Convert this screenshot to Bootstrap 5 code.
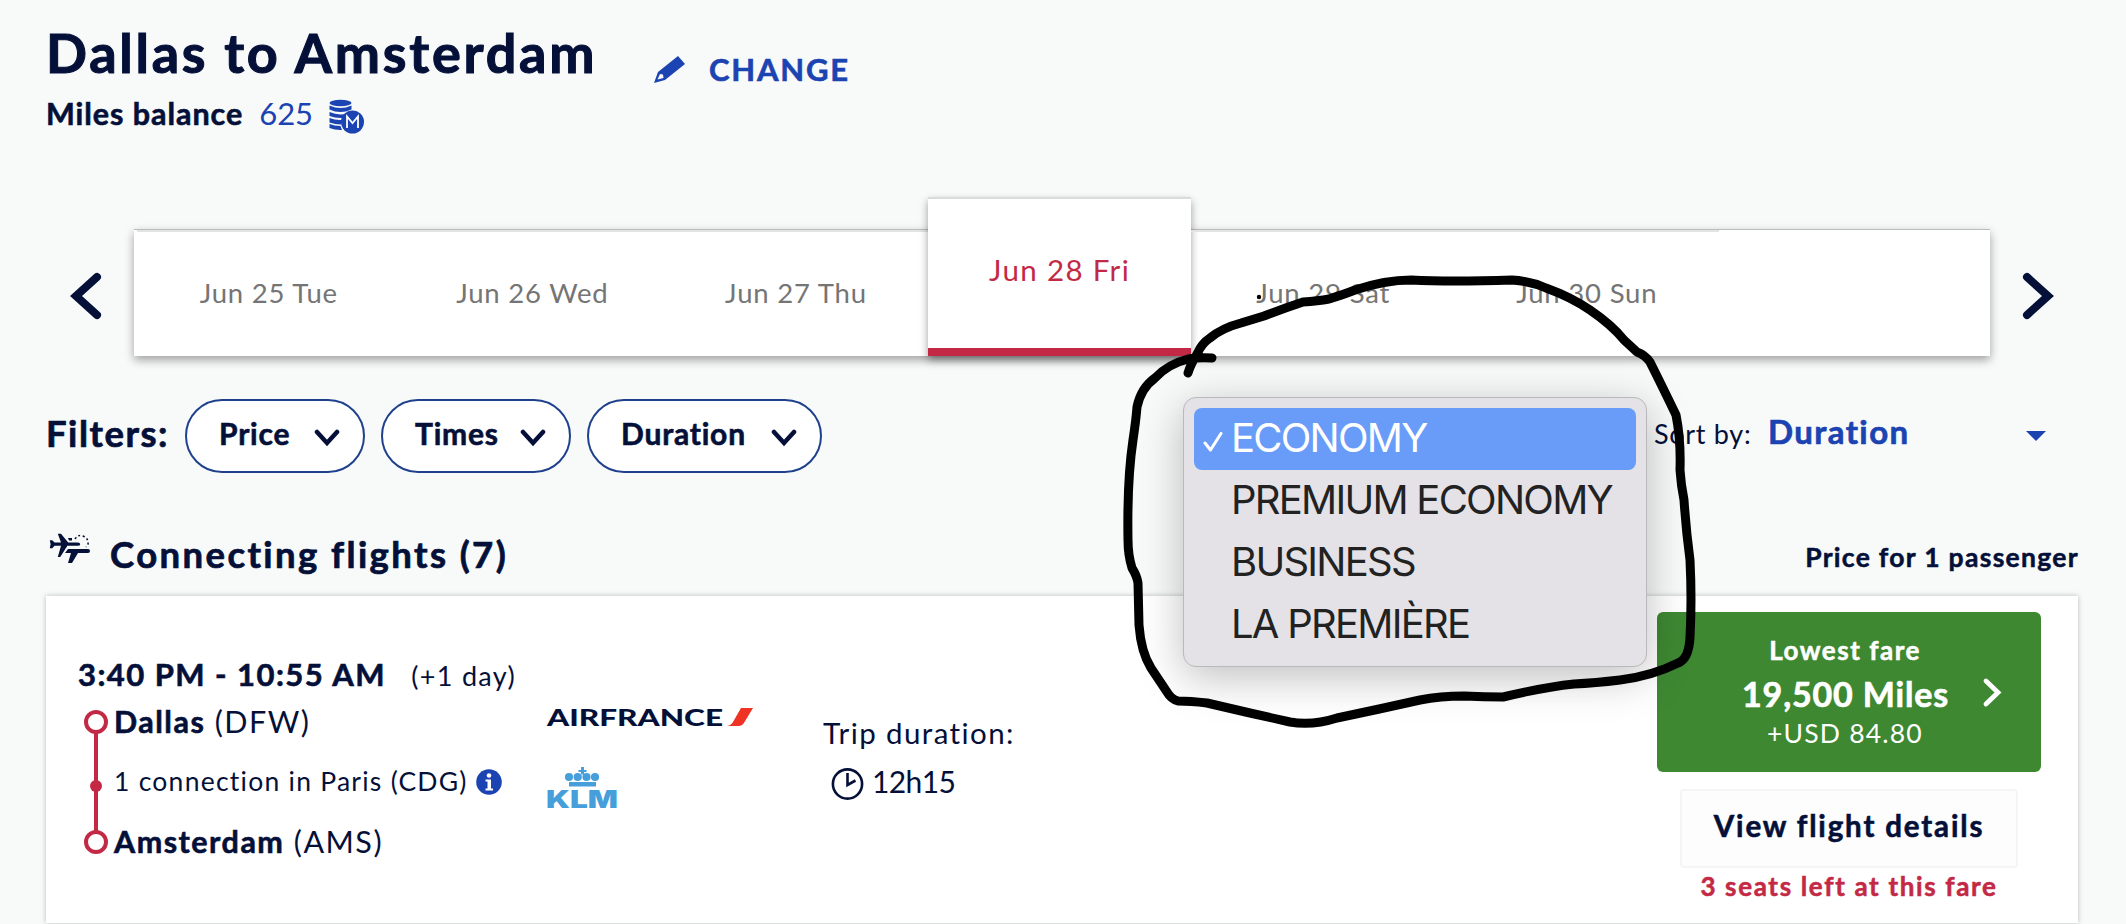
<!DOCTYPE html>
<html lang="en">
<head>
    <meta charset="UTF-8">
    <meta name="viewport" content="width=device-width, initial-scale=1.0">
    <title>Dallas to Amsterdam</title>
    <link href="https://cdn.jsdelivr.net/npm/bootstrap@5.3.0/dist/css/bootstrap.min.css" rel="stylesheet">
    <style>
        body {
            --navy: #051039;
            --blue: #1b43b1;
            --red: #c32945;
            background-color: #f8faf9;
            color: var(--navy);
            font-family: Lato, "Open Sans", sans-serif;
            width: 2126px;
            height: 924px;
            overflow: hidden;
            position: relative;
        }
        svg { display: block; flex: none; }
        b, .fw-bold, .pill, .details { -webkit-text-stroke: .02em currentColor; }
        .text-blue { color: var(--blue); }
        .text-red { color: var(--red); }

        /* Header */
        .page-head { padding: 21px 47px 0 46px; }
        .route-title { font-size: 54px; line-height: 64px; letter-spacing: 2.75px; width: 608px; }
        .change-link { font-size: 31px; line-height: 40px; letter-spacing: 1.8px; margin-top: 28px; gap: 24px; }
        .change-link svg { margin-top: 6px; }
        .miles { font-size: 30.5px; line-height: 36px; height: 36px; margin-top: 6px; letter-spacing: .95px; gap: 16px; }
        .miles .amount { font-size: 31px; letter-spacing: 0; }

        /* Date strip */
        .dates { margin-top: 66px; padding-left: 68px; height: 159px; }
        .dates .arrow { margin-top: 74px; }
        .strip {
            width: 1856px;
            height: 127px;
            margin: 32px 31px 0 31px;
            padding-left: 3px;
            background: #fff;
            border-top: 1px solid #bcbcbc;
            box-shadow: 0 4px 9px rgba(0,0,0,.36);
        }
        .day {
            width: 263.6px;
            height: 126px;
            line-height: 121px;
            border-top: 2px solid #e3e3e3;
            font-size: 27.5px;
            letter-spacing: .8px;
            color: #757575;
            white-space: nowrap;
        }
        .day.active {
            height: 159px;
            margin-top: -33px;
            line-height: 142px;
            font-size: 29.5px;
            letter-spacing: 1.35px;
            color: var(--red);
            background: #fff;
            border-top: 2px solid #dadada;
            border-bottom: 8px solid var(--red);
            box-shadow: 0 4px 8px rgba(0,0,0,.38);
        }

        /* Filters */
        .filters { margin-top: 43px; padding-left: 46px; height: 74px; }
        .filters .title { font-size: 36.5px; line-height: 68px; letter-spacing: 1.5px; width: 139px; }
        .pill {
            width: 180px;
            height: 74px;
            border: 2px solid #1f418d;
            border-radius: 37px;
            background: #fff;
            color: var(--navy);
            font-size: 30px;
            font-weight: 700;
            line-height: 65px;
            letter-spacing: .8px;
            padding: 0 23px 0 32px;
            margin-right: 16px;
        }
        .pill-times { width: 190px; }
        .pill-duration { width: 235px; }
        .pill svg { margin: 28px 0 0 auto; }
        .sort { margin-left: 816px; width: 392px; }
        .sort .by { font-size: 27px; line-height: 69px; letter-spacing: .7px; width: 114px; }
        .sort .value { font-size: 33px; line-height: 65px; letter-spacing: 1.4px; }

        /* Section heading */
        .section-head { margin-top: 60px; padding: 0 48px 0 49px; height: 63px; }
        .section-head .title { font-size: 36.5px; line-height: 43px; letter-spacing: 2.4px; margin-left: 19px; }
        .section-head .price-for { font-size: 26.5px; line-height: 49px; letter-spacing: 1.3px; margin-right: -1px; }

        /* Flight card */
        .flight {
            width: 2032px;
            height: 327px;
            margin-left: 46px;
            background: #fff;
            box-shadow: 0 0 5px rgba(0,0,0,.25);
        }
        .route-col { width: 501px; padding: 60px 0 0 32px; }
        .times { font-size: 31px; line-height: 36px; height: 36px; letter-spacing: 1.45px; }
        .times small { font-size: 27px; letter-spacing: 1.3px; margin-left: 16px; }
        .stops { padding-left: 2px; margin-top: 15px; }
        .stop-list { margin: -6px 0 0 -1px; }
        .stop { font-size: 30.5px; line-height: 40px; letter-spacing: 1.5px; white-space: nowrap; }
        .via { font-size: 26.5px; line-height: 36px; height: 36px; letter-spacing: 1.25px; margin: 22px 0; gap: 8px; white-space: nowrap; }
        .via svg { margin-top: 6px; }
        .air-col { width: 276px; padding-top: 111px; }
        .air-col svg { overflow: visible; }
        .air-col .klm { margin-top: 32px; }
        .trip-col { width: 834px; padding-top: 119px; font-size: 29.5px; line-height: 36px; letter-spacing: 1.4px; }
        .trip-col .total { margin: 12px 0 0 8px; font-size: 30px; letter-spacing: -.6px; gap: 7px; }
        .fare-col { width: 384px; padding-top: 16px; }
        .fare {
            width: 384px;
            height: 160px;
            background: #3e8832;
            border-radius: 6px;
            color: #fff;
            padding: 20px 39px 0 85px;
        }
        .fare .lines { width: 206px; white-space: nowrap; }
        .fare .label { font-size: 26px; line-height: 36px; letter-spacing: 1.5px; }
        .fare .points { font-size: 34px; line-height: 44px; letter-spacing: .85px; margin-top: 4px; }
        .fare .cash { font-size: 26.5px; line-height: 32px; letter-spacing: 1.2px; margin-top: 1px; }
        .fare svg { margin-top: 44px; }
        .details {
            width: 338px;
            height: 79px;
            margin: 17px 0 0 23px;
            border: 2px solid #f5f5f6;
            border-radius: 4px;
            background: #fdfdfe;
            color: var(--navy);
            font-size: 29.5px;
            font-weight: 700;
            line-height: 64px;
            padding: 0 0 6px;
            letter-spacing: 1.85px;
            white-space: nowrap;
        }
        .seats { font-size: 26px; line-height: 36px; letter-spacing: 1.65px; }

        /* Open cabin menu over the page */
        .cabin-menu {
            position: absolute;
            left: 1183px;
            top: 397px;
            width: 464px;
            height: 270px;
            padding: 10px;
            background: #e4e2e7;
            border: 1px solid #b9b8bb;
            border-radius: 13px;
            box-shadow: 0 10px 44px rgba(0,0,0,.26);
            color: #222;
            font-family: Inter, sans-serif;
        }
        .cabin {
            height: 62px;
            line-height: 59px;
            padding-left: 37px;
            font-size: 40px;
            letter-spacing: -1.75px;
            white-space: nowrap;
        }
        .cabin.selected { background: #689cf8; color: #fff; border-radius: 8px; padding-left: 9px; }
        .cabin.selected svg { margin: 24px 8px 0 0; }
        .marker { position: absolute; left: 0; top: 0; pointer-events: none; }
    </style>
</head>
<body>
    <!-- Header -->
    <header class="page-head">
        <div class="d-flex">
            <h1 class="route-title fw-bold mb-0">Dallas to Amsterdam</h1>
            <a class="change-link text-blue d-flex fw-bold text-decoration-none" href="#">
                <svg width="31" height="30" viewBox="0 0 31 30">
                    <path d="M0 28 4 17 24 1l7 8L11 25z" fill="#1b43b1"/>
                    <path d="M3.500 24.500 6 19l3 .5.5 3.500z" fill="#f8faf9"/>
                </svg>
                CHANGE
            </a>
        </div>
        <div class="miles d-flex">
            <span class="fw-bold">Miles balance</span>
            <span class="amount text-blue">625</span>
            <svg width="36" height="36" viewBox="0 0 36 36" class="mt-1">
                <g fill="#1b43b1">
                    <ellipse cx="11.500" cy="4" rx="11" ry="3.300"/>
                    <path d="M.5 6.500q11 5 22 0v4q-11 5-22 0z"/>
                    <path d="M.5 13q9 4 18 1.500l-4 4.500q-8 .5-14-2z"/>
                    <path d="M.5 19q6 2.500 12.500 2l-1 4.500q-6 0-11.500-2z"/>
                    <path d="M.5 25q5 2 11 2l1.500 4q-7 .3-12.500-2z"/>
                    <circle cx="23.500" cy="23" r="11.500"/>
                </g>
                <path d="M18 29V17.500l5.500 6.500 5.500-6.500V29" fill="none" stroke="#fff" stroke-width="1.800"/>
            </svg>
        </div>
    </header>

    <!-- Date strip -->
    <div class="dates d-flex">
        <svg class="arrow" width="35" height="50" viewBox="0 0 35 50"><path d="M29 6 8 25l21 19" fill="none" stroke="#051039" stroke-width="8" stroke-linecap="round"/></svg>
        <div class="strip d-flex text-center">
            <div class="day">Jun 25 Tue</div>
            <div class="day">Jun 26 Wed</div>
            <div class="day">Jun 27 Thu</div>
            <div class="day active">Jun 28 Fri</div>
            <div class="day">Jun 29 Sat</div>
            <div class="day">Jun 30 Sun</div>
        </div>
        <svg class="arrow" width="35" height="50" viewBox="0 0 35 50"><path d="m6 6 21 19L6 44" fill="none" stroke="#051039" stroke-width="8" stroke-linecap="round"/></svg>
    </div>

    <!-- Filters -->
    <div class="filters d-flex">
        <div class="title fw-bold">Filters:</div>
        <button class="pill d-flex">Price<svg width="26" height="18" viewBox="0 0 26 18"><path d="m3 3 10 11L23 3" fill="none" stroke="#051039" stroke-width="4.500" stroke-linecap="round"/></svg></button>
        <button class="pill pill-times d-flex">Times<svg width="26" height="18" viewBox="0 0 26 18"><path d="m3 3 10 11L23 3" fill="none" stroke="#051039" stroke-width="4.500" stroke-linecap="round"/></svg></button>
        <button class="pill pill-duration d-flex">Duration<svg width="26" height="18" viewBox="0 0 26 18"><path d="m3 3 10 11L23 3" fill="none" stroke="#051039" stroke-width="4.500" stroke-linecap="round"/></svg></button>
        <div class="sort d-flex">
            <span class="by">Sort by:</span>
            <span class="value text-blue fw-bold">Duration</span>
            <svg class="ms-auto" width="20" height="42" viewBox="0 0 20 42"><path d="M0 32h20L10 42z" fill="#1b43b1"/></svg>
        </div>
    </div>

    <!-- Section heading -->
    <div class="section-head d-flex">
        <svg width="42" height="32" viewBox="0 0 42 32">
            <g fill="#051039">
                <path d="M1 9h3l3 3h8L11 1h4l9 11h12q3 0 3 2t-3 2H23L14 30h-3l4-14H7l-3 3H1l1-5z" transform="scale(.8)"/>
                <path d="M19 16h20q2 0 2 2t-2 2H29l-6 10h-4l3-10h-6z"/>
                <path d="M19 5h4v2.500h-3z"/>
            </g>
            <path d="M26 6q3-5 8-3 6 3 5 8l-2 3" fill="none" stroke="#051039" stroke-width="1.500" stroke-dasharray="2 2.500"/>
        </svg>
        <h2 class="title fw-bold mb-0">Connecting flights (7)</h2>
        <span class="price-for fw-bold ms-auto">Price for 1 passenger</span>
    </div>

    <!-- Flight -->
    <div class="flight d-flex">
        <div class="route-col">
            <div class="times"><b>3:40 PM - 10:55 AM</b> <small>(+1 day)</small></div>
            <div class="stops d-flex">
                <svg width="35" height="150" viewBox="0 0 35 150" fill="none" stroke="#c32945" stroke-width="4">
                    <path d="M16 25v99"/>
                    <circle cx="16" cy="15" r="10"/>
                    <circle cx="16" cy="135" r="10"/>
                    <circle cx="16" cy="79" r="6" fill="#c32945" stroke="none"/>
                </svg>
                <div class="stop-list">
                    <div class="stop"><b>Dallas</b> <span>(DFW)</span></div>
                    <div class="via d-flex">
                        1 connection in Paris (CDG)
                        <svg width="26" height="26" viewBox="0 0 26 26">
                            <circle cx="13" cy="13" r="12.800" fill="#1b43b1"/>
                            <path d="M9.500 10.500h5.500v9h2v2H9.500v-2h2v-7h-2z" fill="#fff"/>
                            <circle cx="13" cy="6.500" r="2.300" fill="#fff"/>
                        </svg>
                    </div>
                    <div class="stop"><b>Amsterdam</b> <span>(AMS)</span></div>
                </div>
            </div>
        </div>
        <div class="air-col">
            <svg width="210" height="24" viewBox="0 0 210 24">
                <text x="0" y="19" font-family="Lato" font-weight="900" font-size="23" fill="#051039" textLength="176" lengthAdjust="spacingAndGlyphs">AIRFRANCE</text>
                <path d="M180 19q4-.5 6-4l8-14H206l-8.500 14q-2 4-6 4z" fill="#ef3224"/>
            </svg>
            <svg class="klm" width="80" height="56" viewBox="0 0 80 56" fill="#469fdb">
                <path d="M34 4h3v3h2.500v2H37v2.500h-3V9h-2.500V7H34zM22 19h27v4.500H22z"/>
                <circle cx="22" cy="14" r="4.100"/><circle cx="30.700" cy="14" r="4.100"/>
                <circle cx="39.500" cy="14" r="4.100"/><circle cx="48" cy="14" r="4.100"/>
                <text x="-1" y="45" font-family="Inter" font-weight="900" font-size="24" textLength="72" lengthAdjust="spacingAndGlyphs">KLM</text>
            </svg>
        </div>
        <div class="trip-col">
            <div>Trip duration:</div>
            <div class="total d-flex">
                <svg width="34" height="34" viewBox="0 0 34 34" class="mt-1" fill="none" stroke="#051039" stroke-width="2.600">
                    <circle cx="16.500" cy="17" r="14.600"/>
                    <path d="M16.500 6v12l8-4.500"/>
                </svg>
                <span>12h15</span>
            </div>
        </div>
        <div class="fare-col">
            <div class="fare d-flex justify-content-between">
                <div class="lines text-center">
                    <div class="label fw-bold">Lowest fare</div>
                    <div class="points fw-bold">19,500 Miles</div>
                    <div class="cash">+USD 84.80</div>
                </div>
                <svg width="20" height="32" viewBox="0 0 20 32"><path d="m4 5 12 11.500L4 28" fill="none" stroke="#fff" stroke-width="4.800" stroke-linecap="round"/></svg>
            </div>
            <button class="details d-block text-center">View flight details</button>
            <div class="seats text-red fw-bold text-center">3 seats left at this fare</div>
        </div>
    </div>

    <!-- Cabin menu -->
    <div class="cabin-menu">
        <div class="cabin selected d-flex">
            <svg width="20" height="20" viewBox="0 0 20 20"><path d="m2 11 5.500 7L18 1.500" fill="none" stroke="#fff" stroke-width="3" stroke-linecap="round" stroke-linejoin="round"/></svg>
            ECONOMY
        </div>
        <div class="cabin">PREMIUM ECONOMY</div>
        <div class="cabin">BUSINESS</div>
        <div class="cabin">LA PREMIÈRE</div>
    </div>

    <!-- Hand-drawn marker loop -->
    <svg class="marker" width="2126" height="924" viewBox="0 0 2126 924">
        <path fill="none" stroke="#000" stroke-width="9" stroke-linecap="round" stroke-linejoin="round" d="M1188 373C1190 366 1194 359 1197 354Q1202 343 1210 338Q1222 328 1241 323L1264 316Q1282 309 1303 302Q1318 301 1329 299Q1345 294 1355 290Q1385 280 1411 280Q1450 282 1512 280Q1530 281 1546 288Q1571 297 1590 310Q1612 325 1624 340L1637 352Q1645 355 1650 362Q1664 390 1676 415Q1681 440 1680 470Q1681 485 1684 500Q1686 530 1690 560Q1692 600 1690 637Q1689 659 1678 663Q1652 676 1620 680Q1595 683 1574 684Q1545 687 1503 697Q1485 697 1464 696Q1440 696 1420 700Q1380 709 1337 718Q1312 726 1290 722L1250 713L1207 703Q1190 701 1178 701Q1171 699 1167 692L1151 668Q1141 652 1139 625L1138 583Q1137 576 1132 568Q1128 555 1128 540Q1127 480 1133 440Q1136 420 1137 407Q1141 388 1155 378Q1168 364 1188 359Q1200 357 1212 358"/>
        <circle cx="1259" cy="297" r="2.200"/>
    </svg>

    <script src="https://cdn.jsdelivr.net/npm/bootstrap@5.3.0/dist/js/bootstrap.bundle.min.js"></script>
</body>
</html>
